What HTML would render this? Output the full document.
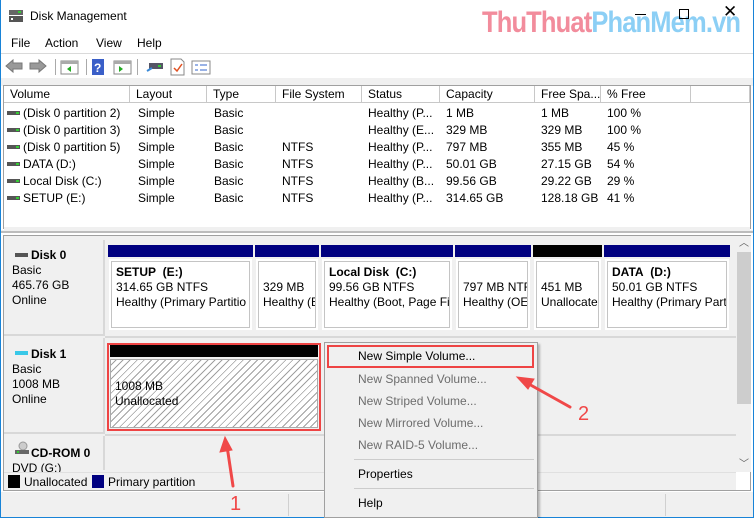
<!DOCTYPE html>
<html><head><meta charset="utf-8"><style>
*{margin:0;padding:0;box-sizing:border-box}
body{width:754px;height:518px;overflow:hidden;background:#fff;font-family:"Liberation Sans",sans-serif;font-size:12px;color:#000;position:relative}
.a{position:absolute;white-space:nowrap}
.hd{position:absolute;top:86px;height:17px;border-right:1px solid #c8c8c8;border-bottom:1px solid #c8c8c8;background:#fff;padding-left:6px;line-height:17px;white-space:nowrap;overflow:hidden}
.row{position:absolute;height:17px;line-height:18px}
.di{position:absolute;width:13px;height:4px;background:#555;top:7px}
.di:after{content:"";position:absolute;right:1px;top:1px;width:3px;height:2px;background:#3c3}
.bar{position:absolute;height:12px;background:#000080}
.pb{position:absolute;background:#fff;border:1px solid #c4c4c4;outline:2px solid #fff;line-height:15px;padding:3px 0 0 4px;overflow:hidden;white-space:nowrap}
.mi{position:absolute;left:358px;color:#6d6d6d}
</style></head><body>
<div class="a" style="left:0;top:0;width:754px;height:518px;border:1px solid #1883d7;border-top:none"></div>
<svg class="a" style="left:8px;top:9px" width="16" height="14"><rect x="1" y="1" width="14" height="5" fill="#666"/><rect x="1" y="7" width="14" height="6" fill="#555"/><rect x="10" y="2" width="3" height="2" fill="#3c3"/><rect x="3" y="9" width="2" height="2" fill="#fff"/></svg>
<div class="a" style="left:30px;top:9px;font-size:12px">Disk Management</div>
<div class="a" style="left:482px;top:6px;font-size:30px;font-weight:bold;letter-spacing:-1px;transform:scaleX(.85);transform-origin:left"><span style="color:#f28c9c">ThuThuat</span><span style="color:#8ccff5">PhanMem.vn</span></div>
<div class="a" style="left:635px;top:14px;width:11px;height:1px;background:#000"></div>
<div class="a" style="left:679px;top:9px;width:10px;height:10px;border:1px solid #000"></div>
<div class="a" style="left:723px;top:2px;font-size:17px;font-weight:300">✕</div>
<div class="a" style="left:11px;top:36px">File</div>
<div class="a" style="left:45px;top:36px">Action</div>
<div class="a" style="left:96px;top:36px">View</div>
<div class="a" style="left:137px;top:36px">Help</div>
<div class="a" style="left:1px;top:53px;width:752px;height:1px;background:#dadada"></div>
<svg class="a" style="left:4px;top:58px" width="210" height="18">
<path d="M2 8 L9 2 V5 H18 V11 H9 V14 Z" fill="#999" stroke="#777"/>
<path d="M42 8 L35 2 V5 H26 V11 H35 V14 Z" fill="#999" stroke="#777"/>
<rect x="51" y="1" width="1" height="16" fill="#aaa"/>
<rect x="57" y="3" width="17" height="13" fill="#fff" stroke="#888"/><rect x="57" y="3" width="17" height="3" fill="#aaa"/><path d="M67 8 L63 11 L67 14Z" fill="#2a2"/>
<rect x="82" y="1" width="1" height="16" fill="#aaa"/>
<rect x="88" y="1" width="12" height="16" fill="#3a5fc8"/><text x="90" y="14" fill="#fff" font-size="12" font-weight="bold" font-family="Liberation Sans">?</text>
<rect x="110" y="3" width="17" height="13" fill="#fff" stroke="#888"/><rect x="110" y="3" width="17" height="3" fill="#aaa"/><path d="M115 8 L119 11 L115 14Z" fill="#2a2"/>
<rect x="133" y="1" width="1" height="16" fill="#aaa"/>
<rect x="145" y="5" width="14" height="6" fill="#556"/><rect x="154" y="7" width="3" height="2" fill="#3c3"/><path d="M143 13 L148 10" stroke="#3a8ad8" stroke-width="2"/>
<path d="M167 1 H177 L180 4 V17 H167 Z" fill="#fff" stroke="#888"/><path d="M170 10 L173 13 L178 6" stroke="#e05020" stroke-width="1.5" fill="none"/>
<rect x="188" y="3" width="18" height="13" fill="#fff" stroke="#888"/><path d="M191 7h3M196 7h7M191 12h3M196 12h7" stroke="#36c"/>
</svg>
<div class="a" style="left:1px;top:78px;width:752px;height:8px;background:#f0f0f0"></div>
<div class="a" style="left:3px;top:85px;width:748px;height:144px;border:1px solid #a0a0a0;border-bottom:none"></div>
<div class="hd" style="left:4px;width:126px">Volume</div>
<div class="hd" style="left:130px;width:77px">Layout</div>
<div class="hd" style="left:207px;width:69px">Type</div>
<div class="hd" style="left:276px;width:86px">File System</div>
<div class="hd" style="left:362px;width:78px">Status</div>
<div class="hd" style="left:440px;width:95px">Capacity</div>
<div class="hd" style="left:535px;width:66px">Free Spa...</div>
<div class="hd" style="left:601px;width:90px">% Free</div>
<div class="hd" style="left:691px;width:59px"></div>
<div class="a" style="left:4px;top:104px;width:746px">
<div class="row" style="top:0"><div class="di" style="left:3px"></div><span class="a" style="left:19px">(Disk 0 partition 2)</span><span class="a" style="left:134px">Simple</span><span class="a" style="left:210px">Basic</span><span class="a" style="left:364px">Healthy (P...</span><span class="a" style="left:442px">1 MB</span><span class="a" style="left:537px">1 MB</span><span class="a" style="left:603px">100 %</span></div>
<div class="row" style="top:17px"><div class="di" style="left:3px"></div><span class="a" style="left:19px">(Disk 0 partition 3)</span><span class="a" style="left:134px">Simple</span><span class="a" style="left:210px">Basic</span><span class="a" style="left:364px">Healthy (E...</span><span class="a" style="left:442px">329 MB</span><span class="a" style="left:537px">329 MB</span><span class="a" style="left:603px">100 %</span></div>
<div class="row" style="top:34px"><div class="di" style="left:3px"></div><span class="a" style="left:19px">(Disk 0 partition 5)</span><span class="a" style="left:134px">Simple</span><span class="a" style="left:210px">Basic</span><span class="a" style="left:278px">NTFS</span><span class="a" style="left:364px">Healthy (P...</span><span class="a" style="left:442px">797 MB</span><span class="a" style="left:537px">355 MB</span><span class="a" style="left:603px">45 %</span></div>
<div class="row" style="top:51px"><div class="di" style="left:3px"></div><span class="a" style="left:19px">DATA (D:)</span><span class="a" style="left:134px">Simple</span><span class="a" style="left:210px">Basic</span><span class="a" style="left:278px">NTFS</span><span class="a" style="left:364px">Healthy (P...</span><span class="a" style="left:442px">50.01 GB</span><span class="a" style="left:537px">27.15 GB</span><span class="a" style="left:603px">54 %</span></div>
<div class="row" style="top:68px"><div class="di" style="left:3px"></div><span class="a" style="left:19px">Local Disk (C:)</span><span class="a" style="left:134px">Simple</span><span class="a" style="left:210px">Basic</span><span class="a" style="left:278px">NTFS</span><span class="a" style="left:364px">Healthy (B...</span><span class="a" style="left:442px">99.56 GB</span><span class="a" style="left:537px">29.22 GB</span><span class="a" style="left:603px">29 %</span></div>
<div class="row" style="top:85px"><div class="di" style="left:3px"></div><span class="a" style="left:19px">SETUP (E:)</span><span class="a" style="left:134px">Simple</span><span class="a" style="left:210px">Basic</span><span class="a" style="left:278px">NTFS</span><span class="a" style="left:364px">Healthy (P...</span><span class="a" style="left:442px">314.65 GB</span><span class="a" style="left:537px">128.18 GB</span><span class="a" style="left:603px">41 %</span></div>
</div>
<div class="a" style="left:4px;top:227px;width:746px;height:3px;background:#f0f0f0"></div>
<div class="a" style="left:1px;top:230px;width:752px;height:3px;background:#f0f0f0;border-bottom:2px solid #bcbcbc"></div>
<div class="a" style="left:3px;top:235px;width:748px;height:256px;background:#fff;border:1px solid #a0a0a0"></div>
<div class="a" style="left:4px;top:236px;width:732px;height:236px;background:#f0f0f0"></div>
<div class="a" style="left:736px;top:236px;width:15px;height:236px;background:#f0f0f0"></div>
<div class="a" style="left:737px;top:252px;width:14px;height:152px;background:#cdcdcd"></div>
<div class="a" style="left:739px;top:234px;font-size:10px;color:#606060">︿</div>
<div class="a" style="left:739px;top:455px;font-size:10px;color:#606060">﹀</div>
<div class="a" style="left:4px;top:240px;width:101px;height:96px;border-right:2px solid #d8d8d8;border-bottom:2px solid #d8d8d8"></div>
<div class="a" style="left:4px;top:338px;width:101px;height:96px;border-right:2px solid #d8d8d8;border-bottom:2px solid #d8d8d8"></div>
<div class="a" style="left:4px;top:436px;width:101px;height:34px;border-right:2px solid #d8d8d8"></div>
<div class="a" style="left:105px;top:336px;width:631px;height:2px;background:#d8d8d8"></div>
<div class="a" style="left:105px;top:434px;width:631px;height:2px;background:#d8d8d8"></div>
<div class="a" style="left:15px;top:253px;width:13px;height:4px;background:#555"></div>
<div class="a" style="left:31px;top:248px;font-weight:bold">Disk 0</div>
<div class="a" style="left:12px;top:263px;line-height:15px">Basic<br>465.76 GB<br>Online</div>
<div class="a" style="left:15px;top:351px;width:13px;height:4px;background:#39c8e8"></div>
<div class="a" style="left:31px;top:347px;font-weight:bold">Disk 1</div>
<div class="a" style="left:12px;top:362px;line-height:15px">Basic<br>1008 MB<br>Online</div>
<svg class="a" style="left:14px;top:441px" width="16" height="14"><circle cx="9" cy="5" r="4" fill="#ccc" stroke="#999"/><rect x="1" y="9" width="14" height="4" fill="#666"/><rect x="3" y="10" width="2" height="2" fill="#3c3"/></svg>
<div class="a" style="left:31px;top:446px;font-weight:bold">CD-ROM 0</div>
<div class="a" style="left:12px;top:461px">DVD (G:)</div>
<div class="bar" style="left:108px;top:245px;width:145px"></div>
<div class="bar" style="left:255px;top:245px;width:64px"></div>
<div class="bar" style="left:321px;top:245px;width:132px"></div>
<div class="bar" style="left:455px;top:245px;width:76px"></div>
<div class="bar" style="left:533px;top:245px;width:69px;background:#000"></div>
<div class="bar" style="left:604px;top:245px;width:126px"></div>
<div class="pb" style="left:111px;top:261px;width:139px;height:67px"><b>SETUP&nbsp; (E:)</b><br>314.65 GB NTFS<br>Healthy (Primary Partitio</div>
<div class="pb" style="left:258px;top:261px;width:58px;height:67px"><br>329 MB<br>Healthy (E</div>
<div class="pb" style="left:324px;top:261px;width:126px;height:67px"><b>Local Disk&nbsp; (C:)</b><br>99.56 GB NTFS<br>Healthy (Boot, Page Fi</div>
<div class="pb" style="left:458px;top:261px;width:70px;height:67px"><br>797 MB NTF<br>Healthy (OE</div>
<div class="pb" style="left:536px;top:261px;width:63px;height:67px"><br>451 MB<br>Unallocate</div>
<div class="pb" style="left:607px;top:261px;width:120px;height:67px"><b>DATA&nbsp; (D:)</b><br>50.01 GB NTFS<br>Healthy (Primary Part</div>
<div class="bar" style="left:110px;top:345px;width:208px;background:#000"></div>
<div class="a" style="left:110px;top:359px;width:208px;height:69px;border:1px solid #aaa;background:repeating-linear-gradient(-45deg,#fff 0,#fff 4px,#a0a0a0 4px,#a0a0a0 5px)"></div>
<div class="a" style="left:115px;top:379px;line-height:15px">1008 MB<br>Unallocated</div>
<div class="a" style="left:107px;top:343px;width:214px;height:88px;border:2px solid #ee4444"></div>
<div class="a" style="left:4px;top:472px;width:732px;height:18px;background:#f0f0f0;border-top:1px solid #e0e0e0"></div>
<div class="a" style="left:8px;top:475px;width:12px;height:13px;background:#000"></div>
<div class="a" style="left:24px;top:475px">Unallocated</div>
<div class="a" style="left:92px;top:475px;width:12px;height:13px;background:#000080"></div>
<div class="a" style="left:108px;top:475px">Primary partition</div>
<div class="a" style="left:1px;top:492px;width:752px;height:25px;background:#f0f0f0"></div>
<div class="a" style="left:288px;top:494px;width:1px;height:22px;background:#d0d0d0"></div>
<div class="a" style="left:665px;top:494px;width:1px;height:22px;background:#d0d0d0"></div>
<div class="a" style="left:324px;top:342px;width:214px;height:176px;background:#f0f0f0;border:1px solid #a0a0a0;box-shadow:2px 2px 2px rgba(0,0,0,.25)"></div>
<div class="a" style="left:327px;top:345px;width:207px;height:23px;border:2px solid #ee4444"></div>
<div class="a" style="left:358px;top:349px">New Simple Volume...</div>
<div class="mi" style="top:372px">New Spanned Volume...</div>
<div class="mi" style="top:394px">New Striped Volume...</div>
<div class="mi" style="top:416px">New Mirrored Volume...</div>
<div class="mi" style="top:438px">New RAID-5 Volume...</div>
<div class="a" style="left:354px;top:459px;width:180px;height:1px;background:#ccc"></div>
<div class="a" style="left:358px;top:467px">Properties</div>
<div class="a" style="left:354px;top:488px;width:180px;height:1px;background:#ccc"></div>
<div class="a" style="left:358px;top:496px">Help</div>
<svg class="a" style="left:0;top:0" width="754" height="518">
<g stroke="#f04848" stroke-width="3" fill="#f04848" stroke-linecap="round">
<line x1="233" y1="486" x2="227" y2="446"/>
<path d="M225 437 L220 452 L232 450 Z" stroke-width="1"/>
<line x1="570" y1="407" x2="527" y2="383"/>
<path d="M517 377 L528 389 L534 379 Z" stroke-width="1"/>
</g>
<text x="230" y="510" fill="#f04848" font-size="20" font-family="Liberation Sans">1</text>
<text x="578" y="420" fill="#f04848" font-size="20" font-family="Liberation Sans">2</text>
</svg>
</body></html>
